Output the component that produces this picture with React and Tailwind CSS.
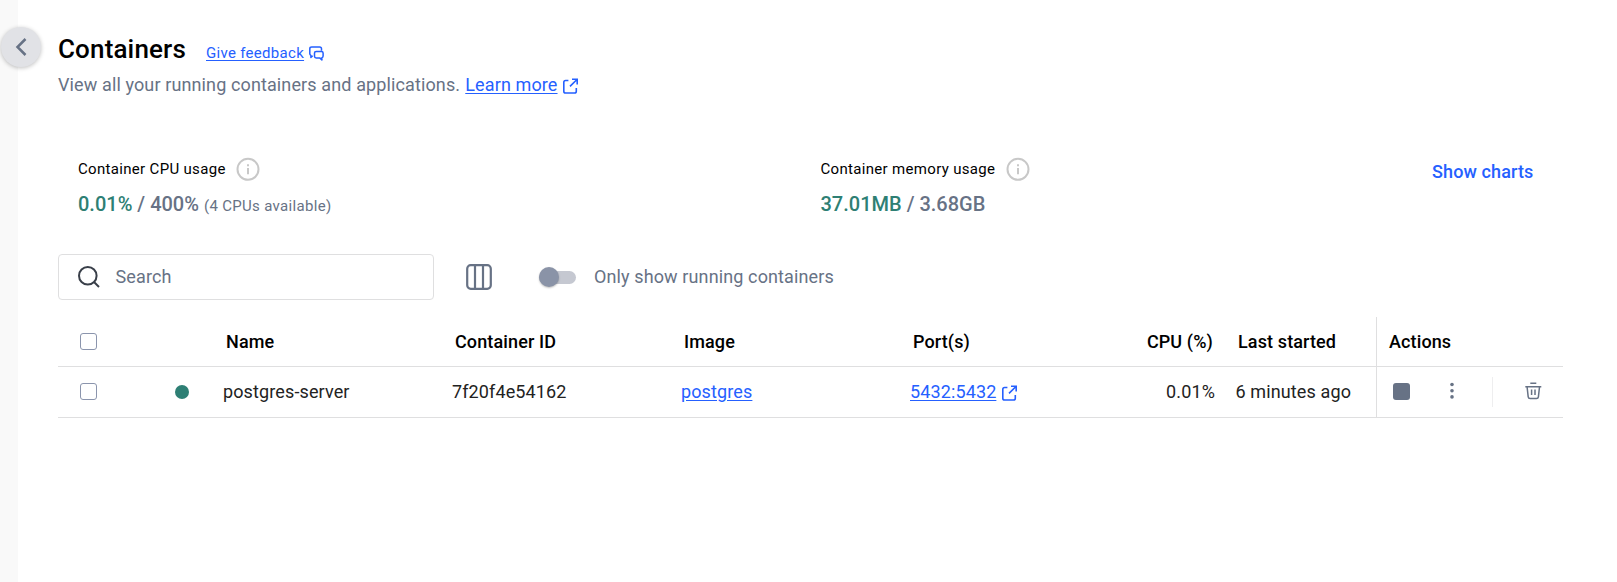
function ExternalIcon({ className }) {
  return (
    <svg className={className} width="15" height="16" viewBox="0 0 15 16" fill="none" stroke="currentColor" strokeWidth="1.6">
      <path d="M5.400 2.500H2.600Q.8 2.500.8 4.300v8.900Q.8 15 2.600 15h8.900q1.800 0 1.800-1.800V10" />
      <path d="M9 1.200h5.200v5.300M14.200 1.200 7 8.400" />
    </svg>
  );
}

function FeedbackIcon() {
  return (
    <svg className="ml-[5px] mt-[2px] shrink-0" width="15" height="15" viewBox="0 0 15 15" fill="none" stroke="currentColor" strokeWidth="1.500" strokeLinejoin="round">
      <path d="M3.700 9.800 1.900 11.400V9.400Q.8 8.900.8 7.800V2.800Q.8.900 2.700.9h7.900q1.900 0 1.900 1.900v2" />
      <path d="M7.200 5.400h5.200q1.700 0 1.700 1.700v3q0 1.300-1.200 1.700v2.100l-2.200-2H7.200q-1.700 0-1.700-1.700V7.100Q5.500 5.400 7.200 5.400Z" />
    </svg>
  );
}

function InfoIcon() {
  return (
    <svg className="ml-[10.5px] shrink-0" width="24" height="24" viewBox="0 0 24 24" fill="none" stroke="#c8c8c8">
      <circle cx="12" cy="12.300" r="10.500" strokeWidth="2" />
      <path d="M12 11v6.200" strokeWidth="2" />
      <path d="M12 7.300v2" strokeWidth="2" />
    </svg>
  );
}

function Checkbox() {
  return <span className="-mt-px block size-[17px] rounded-[3px] border-[1.500px] border-[#8b95ad] bg-white" />;
}

export default function App() {
  return (
    <div className="relative flex h-[582px] w-[1617px] overflow-hidden bg-white font-['Roboto',sans-serif] text-[18px] leading-6 tracking-[0.12px]">
      <aside className="w-[18px] shrink-0 bg-[#f9f9f9]" />
      <button className="absolute left-[1px] top-[27px] flex size-10 items-center justify-center rounded-full bg-[#e1e2e6] text-[#677285] shadow-[0_1px_4px_rgba(0,0,0,0.25)]">
        <svg width="12" height="18" viewBox="0 0 12 18" fill="none" stroke="currentColor" strokeWidth="2.500">
          <path d="M10.500 1 2.500 9l8 8" />
        </svg>
      </button>

      <main className="ml-10 w-[1505px] shrink-0">
        <header className="pt-[33px]">
          <div className="flex h-8 items-center">
            <h1 className="w-[148px] shrink-0 text-[26px] font-medium tracking-[0.15px] text-black">Containers</h1>
            <a className="mt-[7px] flex items-center text-[15px] leading-5 tracking-[0.3px] text-[#2560ff]">
              <span className="underline underline-offset-2">Give feedback</span>
              <FeedbackIcon />
            </a>
          </div>
          <p className="mt-[8px] flex h-6 items-center whitespace-pre text-[#677285]">
            <span>View all your running containers and applications. </span>
            <a className="ml-[0.5px] flex items-center text-[#2560ff]">
              <span className="underline underline-offset-2">Learn more</span>
              <ExternalIcon className="ml-[5.5px] mt-[2px]" />
            </a>
          </p>
        </header>

        <section className="flex pl-5 pt-[60px]">
          <div className="w-[742.5px]">
            <div className="flex h-6 items-center text-[15px] tracking-[0.32px] text-black">
              Container CPU usage
              <InfoIcon />
            </div>
            <div className="mt-[11px] flex h-6 items-baseline text-[20px] font-medium tracking-normal text-[#677285]">
              <span className="whitespace-pre"><span className="text-[#2e7f74]">0.01%</span> / 400% </span>
              <span className="text-[15px] font-normal tracking-[0.32px]">(4 CPUs available)</span>
            </div>
          </div>
          <div className="w-[611.5px]">
            <div className="flex h-6 items-center text-[15px] tracking-[0.32px] text-black">
              Container memory usage
              <InfoIcon />
            </div>
            <div className="mt-[11px] flex h-6 items-baseline text-[20px] font-medium tracking-normal text-[#677285]">
              <span className="whitespace-pre"><span className="text-[#2e7f74]">37.01MB</span> / 3.68GB</span>
            </div>
          </div>
          <a className="mt-[3px] font-medium text-[#2560ff]">Show charts</a>
        </section>

        <section className="mt-[38px] flex h-[46px] items-center text-[#677285]">
          <div className="flex h-[46px] w-[376px] items-center rounded-[4px] border border-[#dfdfe0] pl-[19px]">
            <svg width="22" height="22" viewBox="0 0 22 22" fill="none" stroke="#393f49" strokeWidth="2">
              <circle cx="9.800" cy="9.800" r="8.800" />
              <path d="m16 16 5 5" />
            </svg>
            <span className="ml-[15.5px]">Search</span>
          </div>
          <svg className="ml-8" width="26" height="26" viewBox="0 0 26 26" fill="none" stroke="#677285" strokeWidth="2.200">
            <rect x="1.200" y="1.200" width="23.600" height="23.600" rx="3.500" />
            <path d="M9 1v24M17 1v24" />
          </svg>
          <div className="ml-[47px] flex h-5 w-[37px] items-center">
            <div className="flex h-[13px] w-[37px] items-center rounded-full bg-[#c5c8d1]">
              <div className="size-5 rounded-full bg-[#8a93a7] shadow-[0_1px_2px_rgba(0,0,0,0.25)]" />
            </div>
          </div>
          <span className="ml-[18px]">Only show running containers</span>
        </section>

        <section className="mt-[17px]">
          <div className="flex h-[50px] items-center border-b border-[#dfdfe0] font-medium text-black">
            <div className="w-[168px] pl-[22px]"><Checkbox /></div>
            <div className="w-[229px]">Name</div>
            <div className="w-[229px]">Container ID</div>
            <div className="w-[229px]">Image</div>
            <div className="w-[200px]">Port(s)</div>
            <div className="w-[100px] text-right">CPU (%)</div>
            <div className="w-[163px] pl-[25px]">Last started</div>
            <div className="-mb-px flex h-[50px] grow items-center border-l border-[#dfdfe0] pl-3">Actions</div>
          </div>
          <div className="flex h-[51px] items-center border-b border-[#dfdfe0] text-[#222]">
            <div className="flex w-[165px] items-center pl-[22px]">
              <Checkbox />
              <span className="-mt-px ml-[77.5px] size-[14px] rounded-full bg-[#2e7f74]" />
            </div>
            <div className="w-[229px]">postgres-server</div>
            <div className="w-[229px]">7f20f4e54162</div>
            <div className="w-[229px] text-[#2560ff] underline underline-offset-2">postgres</div>
            <div className="flex w-[200px] items-center text-[#2560ff]">
              <span className="underline underline-offset-2">5432:5432</span>
              <ExternalIcon className="ml-[6px] mt-[2px]" />
            </div>
            <div className="w-[105px] text-right">0.01%</div>
            <div className="w-[161px] pl-[20.5px]">6 minutes ago</div>
            <div className="flex h-[50px] grow items-center border-l border-[#dfdfe0] pl-4">
              <span className="-mt-[2px] size-[17px] rounded-[3px] bg-[#677285]" />
              <svg className="-mt-[2px] ml-[39px]" width="6" height="18" viewBox="0 0 6 18" fill="#677285">
                <circle cx="3" cy="2.500" r="1.800" />
                <circle cx="3" cy="8.700" r="1.800" />
                <circle cx="3" cy="14.900" r="1.800" />
              </svg>
              <span className="ml-[37px] h-[30px] w-px bg-[#eeeeef]" />
              <svg className="-mt-[2px] ml-8" width="17" height="18" viewBox="0 0 17 18" fill="none" stroke="#677285" strokeWidth="1.500">
                <path d="M5.300 1.200h6M.3 4.700h16M2.100 5l1.100 9.800q.2 1.700 1.900 1.700h6.400q1.700 0 1.900-1.700L14.500 5M6.600 7.500V13M10 7.500V13" />
              </svg>
            </div>
          </div>
        </section>
      </main>
    </div>
  );
}
